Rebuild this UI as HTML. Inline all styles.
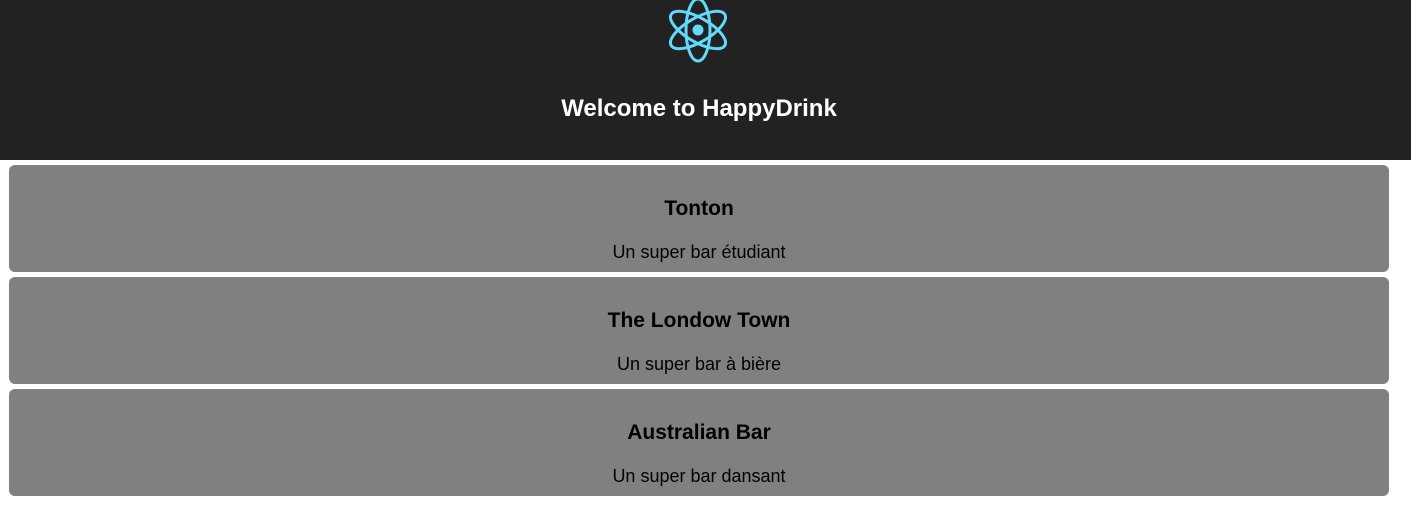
<!DOCTYPE html>
<html><head><style>
body{margin:0;background:#fff;font-family:"Liberation Sans",Arial,sans-serif;width:1411px;height:521px;overflow:hidden}
.hdr{position:absolute;left:0;top:0;width:1411px;height:160px;background:#222}
.hdr h1{position:absolute;top:95px;left:0;width:1398px;text-align:center;margin:0;color:#fff;font-size:24px;font-weight:bold}
.card{position:absolute;left:9px;width:1380px;height:107px;background:#808080;border-radius:6px;text-align:center;color:#000}
.card h2{position:absolute;top:32px;left:0;width:100%;margin:0;font-size:21px;font-weight:bold}
.card p{position:absolute;top:77px;left:0;width:100%;margin:0;font-size:18px}
</style></head><body>
<div class="hdr">
<svg style="position:absolute;left:664px;top:-4px" width="68" height="68" viewBox="-34 -34 68 68">
<g fill="none" stroke="#61dafb" stroke-width="3">
<ellipse rx="12" ry="31"/>
<ellipse rx="12" ry="31" transform="rotate(60)"/>
<ellipse rx="12" ry="31" transform="rotate(-60)"/>
</g><circle r="5.5" fill="#61dafb"/></svg>
<h1>Welcome to HappyDrink</h1>
</div>
<div class="card" style="top:165px"><h2>Tonton</h2><p>Un super bar étudiant</p></div>
<div class="card" style="top:277px"><h2>The Londow Town</h2><p>Un super bar à bière</p></div>
<div class="card" style="top:389px"><h2>Australian Bar</h2><p>Un super bar dansant</p></div>
</body></html>
